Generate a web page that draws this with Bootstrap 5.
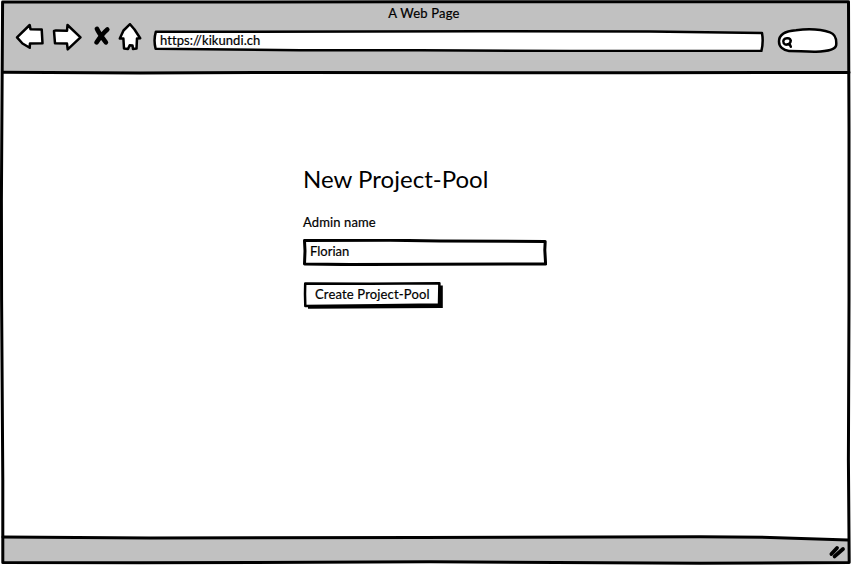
<!DOCTYPE html>
<html lang="en">
<head>
<meta charset="utf-8">
<meta name="viewport" content="width=device-width, initial-scale=1">
<title>A Web Page</title>
<link href="https://cdn.jsdelivr.net/npm/bootstrap@5.3.0/dist/css/bootstrap.min.css" rel="stylesheet">
<style>
  body { font-family: Lato, "Open Sans", sans-serif; font-size: 13px; line-height: 18px; color: #000; background: #fff; -webkit-text-stroke: .2px #000; }
  .sketch-window { width: 851px; height: 565px; }
  .sketch-ink { fill: none; stroke: #000; stroke-width: 3; stroke-linejoin: round; stroke-linecap: round; }
  .sketch-ink .paper { fill: #fff; }
  .sketch-ink .chrome { fill: #c1c1c1; stroke: none; }
  .sketch-ink .solid { fill: #000; stroke: none; }
  .sketch-ink .fine { stroke-width: 2.5; }
  .sketch-ink .slash { stroke-width: 3.8; }
  .sketch-ink .blade { stroke-width: 4.6; }
  .backdrop { z-index: 0; }
  .chrome-top { height: 73px; padding: 4px 12px 0 15px; }
  .chrome-title { letter-spacing: .2px; margin: 0 3px 1px 0; padding-right: 3px; }
  .tool-row { height: 36px; }
  .address { width: 611px; height: 22px; margin-left: 10px; padding-left: 7px; line-height: 20px; letter-spacing: .06px; }
  .search-pill { margin-left: 12px; }
  .pool-form { width: 244px; margin-left: 303px; padding-top: 89px; }
  .pool-title { font-size: 24px; line-height: 34px; letter-spacing: .02px; font-weight: 400; -webkit-text-stroke-width: 0; }
  .pool-label { margin-top: 17px; letter-spacing: .12px; }
  .pool-field { height: 27px; margin-top: 8px; }
  .pool-field input { font-size: 13px; line-height: 18px; padding: 2px 7px 5px; letter-spacing: 0; color: #000; }
  .pool-submit { width: 140px; height: 27px; margin-top: 16px; padding: 0 0 4px 12px; font-size: 13px; line-height: 20px; letter-spacing: .16px; color: #000; }
  .chrome-bottom { height: 27px; padding: 6px 5px 0 0; }
</style>
</head>
<body>
<div class="sketch-window position-relative overflow-hidden d-flex flex-column">
  <!-- Hand-drawn window outline and grey bars -->
  <svg class="sketch-ink backdrop position-absolute top-0 start-0" width="851" height="565" viewBox="0 0 851 565" aria-hidden="true">
    <path class="chrome" d="M2 2H849V73L500 73L2 72Z"/>
    <path class="chrome" d="M3 537L350 538L720 537L849 540V562L2 563Z"/>
    <path d="M2.6 2.1L420 1.8L848.5 1.8L849 130L849 300L848.4 460L849.2 562.5L700 563.2L430 561.8L140 562.8L2.8 562.6L2.8 480L1.6 300L1.4 200Z"/>
    <path d="M3 72.3L140 73.1L300 72.4L640 72.8L849 72.4"/>
    <path d="M3 537L150 537.9L420 537.5L700 536.8L770 537.4L848 540"/>
  </svg>

  <header class="chrome-top position-relative flex-shrink-0">
    <div class="chrome-title text-center">A Web Page</div>
    <div class="tool-row d-flex align-items-center">
      <svg class="sketch-ink flex-shrink-0" width="128" height="36" viewBox="15 23 128 36" role="img" aria-label="Back, forward, stop, home">
        <path class="paper fine" d="M17 37.3L29.7 25L30.5 29.2L41.7 29.4L42.5 43.3L30 43.4L29.7 47.8L22.5 43.5Z"/>
        <path class="paper fine" d="M54 31L56 30.4L67 30.8L67.5 25L80.5 37.3L67.7 49.4L67 43.6L55 43.3Z"/>
        <path class="paper fine" d="M130 24.2L134.5 29.5L140.2 38.2L137 38.4L136.5 48.6L133 49L132.5 45.5L129.7 45.2L128 49L124 48.5L123.4 38.5L119.8 38.5L123.5 30.5Z"/>
        <path class="blade" d="M96.9 28.8Q99 33.5 105.9 42.4M107.3 29.4Q102 34 96.5 42.4"/>
      </svg>
      <div class="address position-relative flex-shrink-0">
        <svg class="sketch-ink position-absolute top-0 start-0" width="611" height="22" viewBox="153 30 611 22" aria-hidden="true">
          <path class="paper fine" d="M155.8 31.8L480 31.3L650 31.5L762 33Q763.6 42 761.4 51L570 51L420 50.3L300 50.2L155.6 48.8Q153.4 40 155.8 31.8Z"/>
        </svg>
        <span class="position-relative">https://kikundi.ch</span>
      </div>
      <svg class="sketch-ink search-pill flex-shrink-0" width="62" height="28" viewBox="777 27 62 28" role="img" aria-label="Search">
        <path class="paper fine" d="M780 41.5C780 35 785 31 797 30.2C808 28.9 822 29.3 831 32.4C837 34.5 837.6 40 837.2 45C836.5 50.2 827 51.4 817 51.8C806 52 799 50.8 790 50.9C784 50.5 780 46.5 780 41.5Z"/>
        <path class="fine" d="M791.6 40.3C791.3 37.9 786.4 37.3 784.8 39.7C783.3 42 785 45 787.8 44.6C790.6 44.2 792 42 791.6 40.3ZM788.4 44.2L790.8 44.4L791.8 46.8"/>
      </svg>
    </div>
  </header>

  <main class="position-relative flex-grow-1">
    <form class="pool-form d-flex flex-column align-items-start">
      <h1 class="pool-title text-nowrap mb-0">New Project-Pool</h1>
      <label class="pool-label" for="admin">Admin name</label>
      <div class="pool-field position-relative w-100">
        <svg class="sketch-ink position-absolute top-0 start-0" width="244" height="27" viewBox="303 239 244 27" aria-hidden="true">
          <path class="paper" d="M304.5 240.6L390 240.2L440 241L545.2 241.4L544.8 250L545.6 264L430 264.2L350 264.6L304.5 264L305 251Z"/>
        </svg>
        <input id="admin" class="position-relative w-100 h-100 border-0 bg-transparent" type="text" value="Florian">
      </div>
      <button class="pool-submit btn position-relative text-start text-nowrap border-0 rounded-0" type="button">
        <svg class="sketch-ink position-absolute top-0 start-0" width="140" height="27" viewBox="303 282 140 27" aria-hidden="true">
          <path class="solid" d="M308 285.5H442.8V308L308 308.7Z"/>
          <path class="paper fine" d="M305.2 283.6L370 283.8L439.4 283.3L439 304.6L380 305.2L305.3 306L305 294Z"/>
        </svg>
        <span class="position-relative">Create Project-Pool</span>
      </button>
    </form>
  </main>

  <footer class="chrome-bottom position-relative d-flex justify-content-end align-items-start flex-shrink-0">
    <svg class="sketch-ink" width="18" height="16" viewBox="828 544 18 16" aria-hidden="true">
      <path class="slash" d="M831.4 554L837 548"/>
      <path class="slash" d="M834.6 556.4L843 549"/>
    </svg>
  </footer>
</div>
<script src="https://cdn.jsdelivr.net/npm/bootstrap@5.3.0/dist/js/bootstrap.bundle.min.js"></script>
</body>
</html>
